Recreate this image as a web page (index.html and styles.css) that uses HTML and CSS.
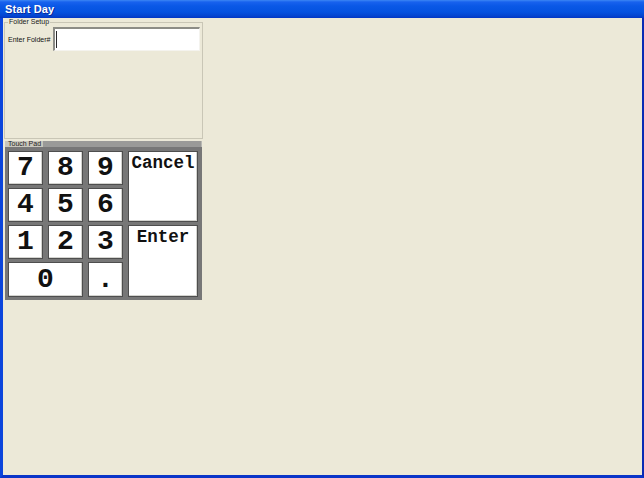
FILE: index.html
```html
<!DOCTYPE html>
<html lang="en">
<head>
<meta charset="utf-8">
<title>Start Day</title>
<link rel="stylesheet" href="styles.css">
</head>
<body>
<div class="window">
  <div class="titlebar"><span class="title">Start Day</span></div>
  <div class="client">
    <fieldset class="group folder-setup">
      <legend class="group-label">Folder Setup</legend>
      <div class="field-row">
        <label class="field-label">Enter Folder#</label>
        <div class="textbox"><span class="caret"></span></div>
      </div>
    </fieldset>

    <div class="touchpad">
      <div class="touchpad-head">
        <span class="touchpad-label">Touch Pad</span>
        <span class="touchpad-rule"></span>
      </div>
      <div class="keys">
        <button class="key digit">7</button>
        <button class="key digit">8</button>
        <button class="key digit">9</button>
        <button class="key word tall">Cancel</button>
        <button class="key digit">4</button>
        <button class="key digit">5</button>
        <button class="key digit">6</button>
        <button class="key digit">1</button>
        <button class="key digit">2</button>
        <button class="key digit">3</button>
        <button class="key word tall">Enter</button>
        <button class="key digit wide">0</button>
        <button class="key digit">.</button>
      </div>
    </div>
  </div>
</div>
</body>
</html>
```
FILE: styles.css
```css
* { box-sizing: border-box; }

html, body {
  margin: 0;
  padding: 0;
  width: 644px;
  height: 478px;
  overflow: hidden;
}

.window {
  width: 644px;
  height: 478px;
  display: flex;
  flex-direction: column;
  font-family: "Liberation Sans", Arial, sans-serif;
}

/* caption bar */
.titlebar {
  height: 18px;
  flex: none;
  display: flex;
  align-items: center;
  padding-left: 5px;
  background: linear-gradient(to bottom, #3c86f4 0px, #1862ee 2px, #0a58e6 6px, #0552e0 12px, #0444cf 16px, #0336c4 18px);
}

.title {
  color: #ffffff;
  font-weight: bold;
  font-size: 11px;
  letter-spacing: 0.1px;
  text-shadow: 1px 1px 0 #0a2a9a;
}

/* window body */
.client {
  flex: 1;
  background: #ece9d8;
  border-left: 3px solid #0b45dc;
  border-right: 2px solid #0a2ab4;
  border-bottom: 3px solid #0a35c8;
  display: flex;
  flex-direction: column;
  align-items: flex-start;
}

/* Folder Setup group box */
.group {
  margin: 0 0 0 1px;
  padding: 1px 2px 0 3px;
  width: 199px;
  height: 121px;
  border: 1px solid #c9c6b6;
  min-inline-size: 0;
}

.group-label {
  padding: 0 1px;
  margin-left: 0;
  font-size: 7px;
  line-height: 8px;
  color: #1a1a1a;
}

.field-row {
  display: flex;
  align-items: center;
}

.field-label {
  width: 45px;
  font-size: 7px;
  color: #111;
  white-space: nowrap;
}

.textbox {
  width: 148px;
  height: 24px;
  background: #ffffff;
  border-top: 2px solid #8c8c86;
  border-left: 2px solid #8c8c86;
  border-right: 1px solid #f4f3ee;
  border-bottom: 1px solid #f4f3ee;
  padding: 2px 0 0 1px;
}

.caret {
  display: block;
  width: 1px;
  height: 17px;
  background: #2b2b2b;
}

/* Touch Pad panel */
.touchpad {
  margin: 2px 0 0 2px;
  width: 197px;
  background: #777777;
  padding-bottom: 3px;
}

.touchpad-head {
  display: flex;
  height: 6px;
  align-items: stretch;
}

.touchpad-label {
  font-size: 7px;
  line-height: 6px;
  color: #1e1e1e;
  background: #c9c7bd;
  padding: 0 2px 0 3px;
  white-space: nowrap;
}

.touchpad-rule {
  flex: 1;
  background: #9a9a98;
  border-right: 1px solid #b8b8b4;
}

.keys {
  display: grid;
  grid-template-columns: 35px 35px 35px 70px;
  grid-template-rows: 34px 34px 34px 35px;
  column-gap: 5px;
  row-gap: 3px;
  padding: 4px 0 0 3px;
}

.key {
  margin: 0;
  padding: 0;
  background: #ffffff;
  border: 1px solid #4e4e4e;
  box-shadow: inset -1px -1px 0 #d4d4d0;
  font-family: "Liberation Mono", "Courier New", monospace;
  font-weight: bold;
  color: #111111;
  display: flex;
  justify-content: center;
}

.digit {
  align-items: center;
  font-size: 28px;
  line-height: 28px;
}

.word {
  align-items: flex-start;
  font-size: 17.5px;
  line-height: 17px;
  padding-top: 3px;
}

.tall { grid-row: span 2; }
.wide { grid-column: span 2; }
```
